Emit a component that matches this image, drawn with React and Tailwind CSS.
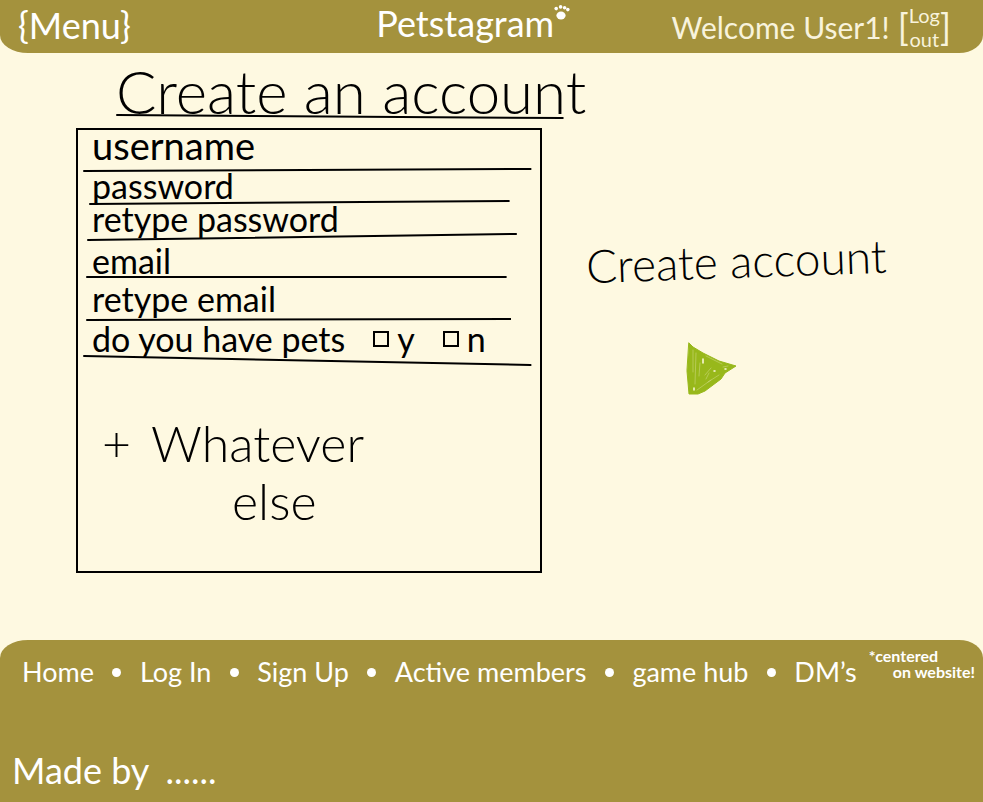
import React from 'react';

const fields = [
  { id: 'username', label: 'username', type: 'text', row: 'h-[37px] pb-2', size: 'text-[38px]', rule: 'ml-[5px] w-[97%]', y1: 4, y2: 2 },
  { id: 'password', label: 'password', type: 'password', row: 'h-[28px]', size: 'text-[34px]', rule: 'ml-[11px] w-[91%]', y1: 4, y2: 1 },
  { id: 'password2', label: 'retype password', type: 'password', row: 'h-[28px]', size: 'text-[34px]', rule: 'ml-[9px] w-[93%]', y1: 7, y2: 1 },
  { id: 'email', label: 'email', type: 'email', row: 'h-[34px]', size: 'text-[34px]', rule: 'ml-[8px] w-[91%]', y1: 2, y2: 2 },
  { id: 'email2', label: 'retype email', type: 'email', row: 'h-[39px] pb-1', size: 'text-[34px]', rule: 'ml-[8px] w-[92%]', y1: 3, y2: 2 },
];

const links = ['Home', 'Log In', 'Sign Up', 'Active members', 'game hub', 'DM\u2019s'];

function Rule({ className, y1, y2 }) {
  const height = Math.max(y1, y2) + 1;
  return (
    <svg
      aria-hidden="true"
      className={`block ${className}`}
      height={height}
      viewBox={`0 0 450 ${height}`}
      preserveAspectRatio="none"
    >
      <line x1="1" y1={y1} x2="449" y2={y2} stroke="#000" strokeWidth="2" strokeLinecap="round" />
    </svg>
  );
}

function Paw() {
  return (
    <svg aria-hidden="true" className="h-[16px] w-[16px]" viewBox="0 0 16 16" fill="#fff">
      <ellipse cx="7" cy="10.5" rx="4.6" ry="4" />
      <circle cx="2.2" cy="3.6" r="1.8" />
      <circle cx="6.6" cy="1.9" r="1.8" />
      <circle cx="10.6" cy="2.8" r="1.8" />
      <circle cx="13.8" cy="4.6" r="1.8" />
    </svg>
  );
}

function Arrow() {
  return (
    <svg aria-hidden="true" className="h-[54px] w-[52px]" viewBox="0 0 52 54" fill="none" strokeLinecap="round" strokeLinejoin="round">
      <path d="M3 2 L7 6 L17 12 L33 20 L50 25 L39 32 L35 38 L19 50 L12 53 L3 53 L1 30 Z" fill="#98b81b" stroke="#98b81b" />
      <path d="M7 9 L7 31 M10 12 L9 43 M14 22 L13 35 M23 32 L20 38 M11 49 L25 39 M20 15 L36 23 M37 26 L42 25 M19 34 L25 27 M22 41 L33 34" stroke="#d5dd8f" strokeWidth="0.5" />
      <path d="M17 18 L17 22 M8 47 L8 49 M28 30 L29 30 M39 28 L40 28" stroke="#fef9e1" strokeWidth="1.5" />
    </svg>
  );
}

function TickBox({ id, label }) {
  return (
    <span className="flex items-center gap-2">
      <input id={id} type="checkbox" className="h-4 w-4 appearance-none border-2 border-black checked:bg-black" />
      <label htmlFor={id}>{label}</label>
    </span>
  );
}

export default function App() {
  return (
    <div className="flex min-h-screen flex-col bg-[#fef9e1] font-['Lato',sans-serif] text-black">
      <header className="flex h-[53px] items-center justify-between rounded-bl-[28px_18px] rounded-br-[24px_18px] bg-[#a4923d] pr-8 pl-[18px] text-white">
        <button type="button" className="pb-1 text-[36px] leading-none">{'{Menu}'}</button>
        <a href="#home" className="flex items-start pb-2 pl-36">
          <span className="text-[36px] leading-none">Petstagram</span>
          <Paw />
        </a>
        <div className="flex items-center gap-2 text-[#f8f3dc]">
          <span className="text-[30px] leading-none">Welcome User1!</span>
          <button type="button" className="flex items-center text-[36px] leading-none">
            [
            <span className="flex flex-col text-[20px] leading-6">
              <span>Log</span>
              <span>out</span>
            </span>
            ]
          </button>
        </div>
      </header>

      <main className="grid flex-1 grid-cols-[36fr_34fr] pb-[67px] pl-[76px]">
        <section className="min-w-0">
          <div className="h-[75px] pt-[15px] pl-10">
            <h1 className="text-[60px] leading-[46px] font-light whitespace-nowrap">Create an account</h1>
            <Rule className="w-[105%]" y1={1} y2={4} />
          </div>
          <form className="min-h-[445px] border-2 border-black">
            {fields.map((f) => (
              <React.Fragment key={f.id}>
                <div className={`flex items-end gap-2 pr-8 pl-[14px] ${f.row}`}>
                  <label htmlFor={f.id} className={`leading-7 whitespace-nowrap ${f.size}`}>{f.label}</label>
                  <input id={f.id} type={f.type} className="h-7 min-w-0 flex-1 bg-transparent text-[24px] outline-none" />
                </div>
                <Rule className={f.rule} y1={f.y1} y2={f.y2} />
              </React.Fragment>
            ))}
            <fieldset className="flex h-[34px] min-w-0 items-end gap-7 pl-[14px] text-[34px] leading-8 whitespace-nowrap">
              <legend className="float-left">do you have pets</legend>
              <TickBox id="pets-yes" label="y" />
              <TickBox id="pets-no" label="n" />
            </fieldset>
            <Rule className="ml-[5px] w-[97%]" y1={1} y2={10} />
            <p className="pt-[48px] pl-6 text-[50px] leading-[58px] font-light">
              <span className="flex gap-5">
                <span>+</span>
                <span>Whatever</span>
              </span>
              <span className="block pl-[130px]">else</span>
            </p>
          </form>
        </section>

        <section className="flex min-w-0 flex-col items-start pt-[182px] pl-11">
          <button type="button" className="flex flex-col text-[46px] leading-[52px] font-light whitespace-nowrap">
            <span className="-rotate-2">Create account</span>
            <span className="pt-[54px] pl-[100px]"><Arrow /></span>
          </button>
        </section>
      </main>

      <footer className="flex min-h-[162px] flex-col justify-between rounded-tl-[28px_18px] rounded-tr-[24px_18px] bg-[#a4923d] pt-2 pb-3 text-white">
        <div className="flex items-start gap-3 pr-2 pl-[22px]">
          <nav className="flex flex-1 items-center justify-between pt-2">
            {links.map((name, i) => (
              <React.Fragment key={name}>
                {i > 0 && <span aria-hidden="true" className="h-[9px] w-[9px] rounded-full bg-white" />}
                <a href={`#${i}`} className="text-[27px] leading-8 whitespace-nowrap">{name}</a>
              </React.Fragment>
            ))}
          </nav>
          <p className="text-[16px] leading-4 font-bold">
            *centered
            <span className="block pl-6">on website!</span>
          </p>
        </div>
        <p className="flex items-baseline gap-4 pl-3 text-[36px] leading-10">
          <span>Made by</span>
          <span>......</span>
        </p>
      </footer>
    </div>
  );
}
